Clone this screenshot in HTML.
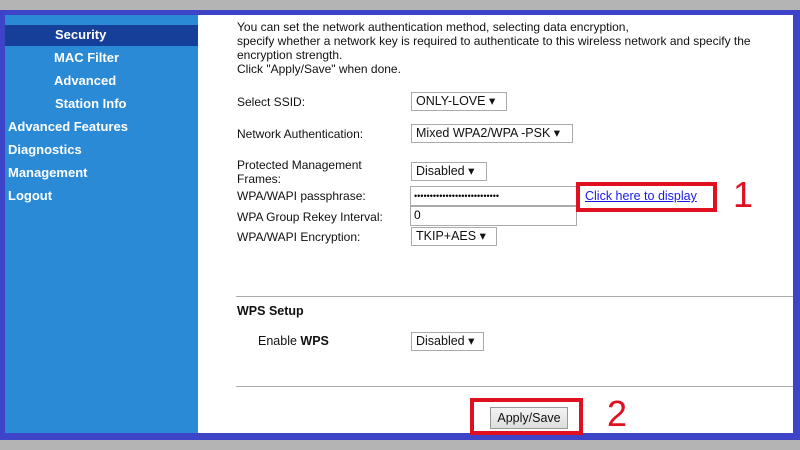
<!DOCTYPE html>
<html><head><style>
*{margin:0;padding:0;box-sizing:border-box}
body{width:800px;height:450px;background:#b4b4b4;position:relative;overflow:hidden;font-family:"Liberation Sans",Arial,sans-serif}
.frame{position:absolute;left:0;top:10px;width:800px;height:430px;background:#3e44c8}
.side{position:absolute;left:5px;top:15px;width:193px;height:418px;background:#2a8ad6;overflow:hidden}
.main{position:absolute;left:198px;top:15px;width:595px;height:418px;background:#fff}
.nav{position:absolute;color:#fff;font-weight:bold;font-size:13px}
.sel{position:absolute;left:5px;top:25px;width:193px;height:21px;background:#153f98}
.t{position:absolute;font-size:12px;color:#111;line-height:14px}
.sb{position:absolute;border:1px solid #aaa;background:#fff;font-size:12.5px;padding:1px 4px;height:19px;line-height:15px;color:#111}
.in{position:absolute;border:1px solid #aaa;background:#fff;font-size:12px;padding:1px 3px;height:20px}
.hr{position:absolute;left:236px;width:557px;height:1px;background:#aaa}
.red{position:absolute;border:4px solid #e01020}
.num{position:absolute;color:#e01020;font-size:36px;font-family:"Liberation Sans",sans-serif}
</style></head><body>
<div class="frame"></div>
<div class="side"><div class="nav" style="left:49px;top:-12px">Basic</div></div>
<div class="main"></div>
<div class="sel"></div>
<div class="nav" style="left:55px;top:27px">Security</div>
<div class="nav" style="left:54px;top:50px">MAC Filter</div>
<div class="nav" style="left:54px;top:73px">Advanced</div>
<div class="nav" style="left:55px;top:96px">Station Info</div>
<div class="nav" style="left:8px;top:119px">Advanced Features</div>
<div class="nav" style="left:8px;top:142px">Diagnostics</div>
<div class="nav" style="left:8px;top:165px">Management</div>
<div class="nav" style="left:8px;top:188px">Logout</div>

<div class="t" style="left:237px;top:20px;width:550px">You can set the network authentication method, selecting data encryption,<br>specify whether a network key is required to authenticate to this wireless network and specify the<br>encryption strength.<br>Click "Apply/Save" when done.</div>
<div class="t" style="left:237px;top:95px">Select SSID:</div>
<div class="sb" style="left:411px;top:92px;width:96px">ONLY-LOVE ▾</div>
<div class="t" style="left:237px;top:127px">Network Authentication:</div>
<div class="sb" style="left:411px;top:124px;width:162px">Mixed WPA2/WPA -PSK ▾</div>
<div class="t" style="left:237px;top:158px">Protected Management<br>Frames:</div>
<div class="sb" style="left:411px;top:162px;width:76px">Disabled ▾</div>
<div class="t" style="left:237px;top:189px">WPA/WAPI passphrase:</div>
<div class="in" style="left:410px;top:186px;width:167px;font-size:9px;line-height:16px">•••••••••••••••••••••••••••</div>
<div class="t" style="left:237px;top:210px">WPA Group Rekey Interval:</div>
<div class="in" style="left:410px;top:206px;width:167px">0</div>
<div class="t" style="left:237px;top:230px">WPA/WAPI Encryption:</div>
<div class="sb" style="left:411px;top:227px;width:86px">TKIP+AES ▾</div>
<div class="red" style="left:576px;top:182px;width:141px;height:30px"></div>
<div style="position:absolute;left:585px;top:189px;font-size:12.5px;color:#1a1ae6;text-decoration:underline">Click here to display</div>
<div class="num" style="left:733px;top:174px">1</div>

<div class="hr" style="top:296px"></div>
<div class="t" style="left:237px;top:304px;font-weight:bold;font-size:12.5px">WPS Setup</div>
<div class="t" style="left:258px;top:334px;font-size:12.5px">Enable <b>WPS</b></div>
<div class="sb" style="left:411px;top:332px;width:73px">Disabled ▾</div>
<div class="hr" style="top:386px"></div>
<div class="red" style="left:470px;top:398px;width:113px;height:37px"></div>
<div style="position:absolute;left:490px;top:407px;width:78px;height:22px;border:1px solid #999;background:linear-gradient(#f4f4f4,#ddd);font-size:12.5px;text-align:center;line-height:20px;color:#111">Apply/Save</div>
<div class="num" style="left:607px;top:393px">2</div>
</body></html>
